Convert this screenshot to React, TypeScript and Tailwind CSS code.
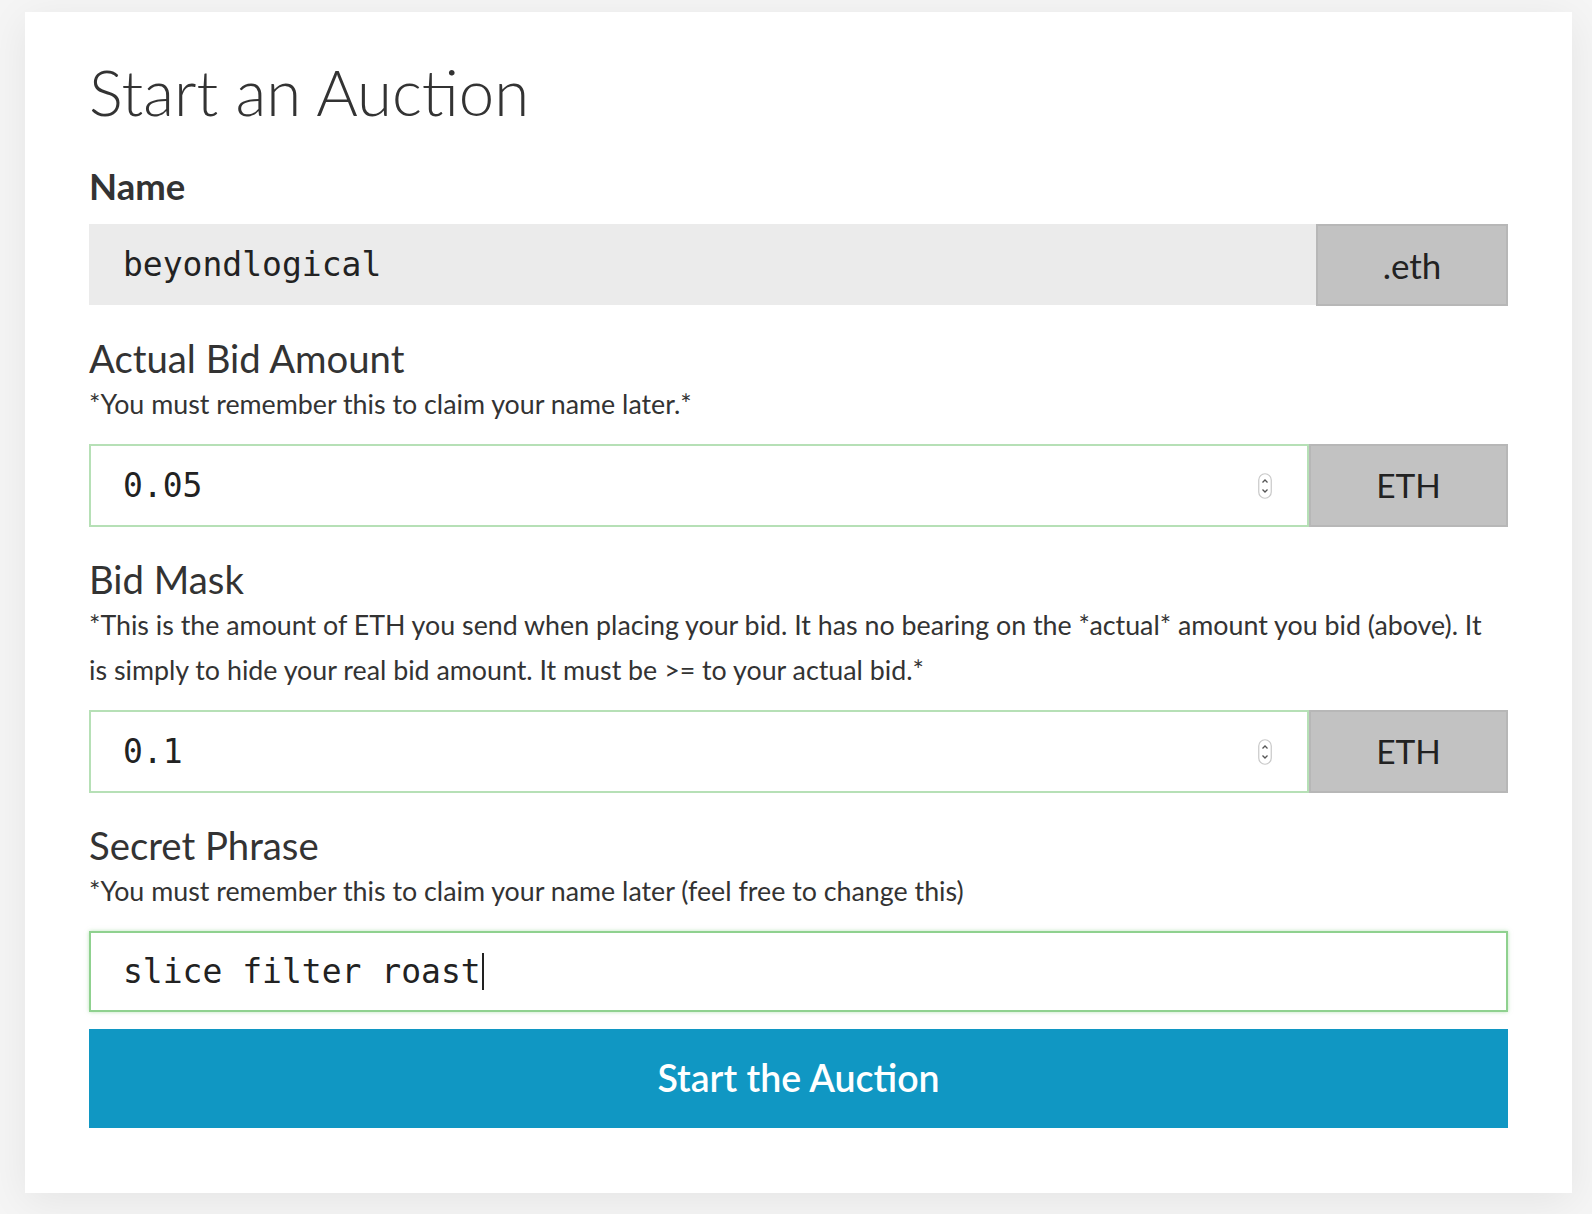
import { FC } from "react";

const lato = "font-['Lato','Liberation_Sans',sans-serif]";
const mono = "font-['DejaVu_Sans_Mono','Liberation_Mono',monospace]";

const Spinner: FC = () => (
  <svg width="14" height="26" viewBox="0 0 14 26" className="shrink-0">
    <rect x="0.75" y="0.75" width="12.5" height="24.5" rx="6.25" fill="#fff" stroke="#c8c8c8" strokeWidth="1.2" />
    <path d="M4.5 9.5 L7 7 L9.5 9.5" fill="none" stroke="#555" strokeWidth="1.3" />
    <path d="M4.5 16.5 L7 19 L9.5 16.5" fill="none" stroke="#555" strokeWidth="1.3" />
  </svg>
);

const Addon: FC<{ label: string; width: string; size: string }> = ({ label, width, size }) => (
  <div
    className={`${width} ${size} flex items-center justify-center bg-[#c2c2c2] border-2 border-[#b7b7b7] text-[#222] ${lato}`}
  >
    {label}
  </div>
);

const NumberRow: FC<{ value: string }> = ({ value }) => (
  <div className="mt-[17px] flex h-[83px]">
    <div className="flex flex-1 items-center justify-between border-2 border-[#b6e0b6] bg-white pl-[32px] pr-[35px]">
      <span className={`${mono} text-[33px] text-[#222]`}>{value}</span>
      <Spinner />
    </div>
    <Addon label="ETH" width="w-[199px]" size="text-[33.5px]" />
  </div>
);

const Label: FC<{ text: string }> = ({ text }) => (
  <h2 className={`mt-[31px] text-[38.3px] leading-[43px] text-[#333] ${lato}`}>{text}</h2>
);

const Note: FC<{ text: string }> = ({ text }) => (
  <p className={`mt-[2px] pr-[26px] text-[26.8px] leading-[45px] text-[#333] ${lato}`}>{text}</p>
);

const App: FC = () => {
  return (
    <div className="min-h-screen bg-[#f5f5f5] pt-[12px] pl-[25px] pb-[21px]">
      <div className="w-[1547px] h-[1181px] bg-white px-[64px] pt-[44px] shadow-[0_8px_40px_rgba(0,0,0,0.07)]">
        {/* Title */}
        <h1 className={`text-[63.5px] font-light leading-[72px] text-[#333] ${lato}`}>Start an Auction</h1>

        {/* Name */}
        <h2 className={`mt-[37px] text-[36.5px] font-bold leading-[42px] text-[#333] ${lato}`}>Name</h2>
        <div className="mt-[17px] flex h-[82px]">
          <div className="flex flex-1 items-center bg-[#ebebeb] pl-[34px] mb-[1px]">
            <span className={`${mono} text-[33px] text-[#222]`}>beyondlogical</span>
          </div>
          <Addon label=".eth" width="w-[192px]" size="text-[35px]" />
        </div>

        {/* Actual bid */}
        <Label text="Actual Bid Amount" />
        <Note text="*You must remember this to claim your name later.*" />
        <NumberRow value="0.05" />

        {/* Bid mask */}
        <Label text="Bid Mask" />
        <Note text="*This is the amount of ETH you send when placing your bid. It has no bearing on the *actual* amount you bid (above). It is simply to hide your real bid amount. It must be >= to your actual bid.*" />
        <NumberRow value="0.1" />

        {/* Secret phrase */}
        <Label text="Secret Phrase" />
        <Note text="*You must remember this to claim your name later (feel free to change this)" />
        <div className="mt-[17px] flex h-[81px] items-center border-2 border-[#8fd18f] bg-white pl-[32px] shadow-[0_0_4px_rgba(143,209,143,0.6)]">
          <span className={`${mono} text-[33px] text-[#222]`}>slice filter roast</span>
          <span className="ml-[1px] h-[37px] w-[2px] bg-[#222]" />
        </div>

        {/* Submit */}
        <button
          className={`mt-[17px] flex h-[99px] w-full items-center justify-center bg-[#1097c3] text-[37.5px] font-semibold text-white ${lato}`}
        >
          Start the Auction
        </button>
      </div>
    </div>
  );
};

export default App;
